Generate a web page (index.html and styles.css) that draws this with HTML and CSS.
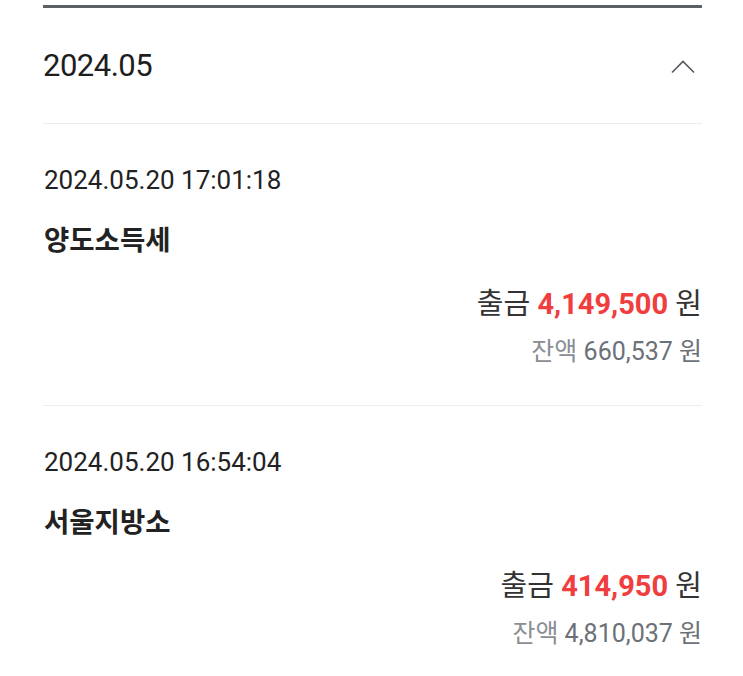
FILE: index.html
```html
<!DOCTYPE html>
<html lang="ko">
<head>
    <meta charset="UTF-8">
    <meta name="viewport" content="width=device-width, initial-scale=1.0">
    <title>거래내역</title>
    <link rel="stylesheet" href="styles.css">
</head>
<body>
    <div class="wrap">
        <div class="top-line"></div>
        <div class="month">
            <h2 class="month-title">2024.05</h2>
            <svg class="chevron" width="24" height="14" viewBox="0 0 24 14">
                <path d="M1 12.5 L12 1.5 L23 12.5" fill="none" stroke="#55595f" stroke-width="1.6"/>
            </svg>
        </div>

        <div class="item">
            <p class="date">2024.05.20 17:01:18</p>
            <p class="name">양도소득세</p>
            <p class="amount">출금 <b>4,149,500</b> 원</p>
            <p class="balance"><span class="label">잔액</span> 660,537 원</p>
        </div>

        <div class="item">
            <p class="date">2024.05.20 16:54:04</p>
            <p class="name">서울지방소</p>
            <p class="amount">출금 <b>414,950</b> 원</p>
            <p class="balance"><span class="label">잔액</span> 4,810,037 원</p>
        </div>
    </div>
</body>
</html>
```

FILE: styles.css
```css
body {
    margin: 0;
    background: #fff;
    font-family: Roboto, "Noto Sans CJK KR", sans-serif;
    color: #222;
}
.wrap {
    padding: 0 41px 0 43px;
}
.top-line {
    margin-top: 5px;
    height: 3px;
    background: #5b6067;
}
.month {
    height: 115px;
    display: flex;
    align-items: center;
    justify-content: space-between;
    border-bottom: 1px solid #ededed;
}
.month-title {
    margin: 0;
    font-size: 31px;
    font-weight: 400;
    letter-spacing: -0.5px;
    color: #1e1e1e;
}
.chevron {
    margin-right: 7px;
    margin-top: 2px;
}
.item {
    padding: 40px 0 37px 1px;
    border-bottom: 1px solid #ededed;
}
.item:last-child {
    border-bottom: none;
}
.item p {
    margin: 0;
}
.date {
    font-size: 26px;
    line-height: 32px;
    color: #222;
}
.name {
    margin-top: 29px !important;
    font-size: 27.5px;
    line-height: 32px;
    font-weight: 700;
    color: #222;
}
.amount {
    margin-top: 29px !important;
    text-align: right;
    font-size: 29px;
    line-height: 36px;
    color: #333;
}
.amount b {
    color: #f03d3d;
    font-weight: 700;
}
.balance {
    margin-top: 14px !important;
    text-align: right;
    font-size: 25px;
    line-height: 32px;
    color: #6c7178;
}
.balance .label {
    color: #8a8e94;
}
```
